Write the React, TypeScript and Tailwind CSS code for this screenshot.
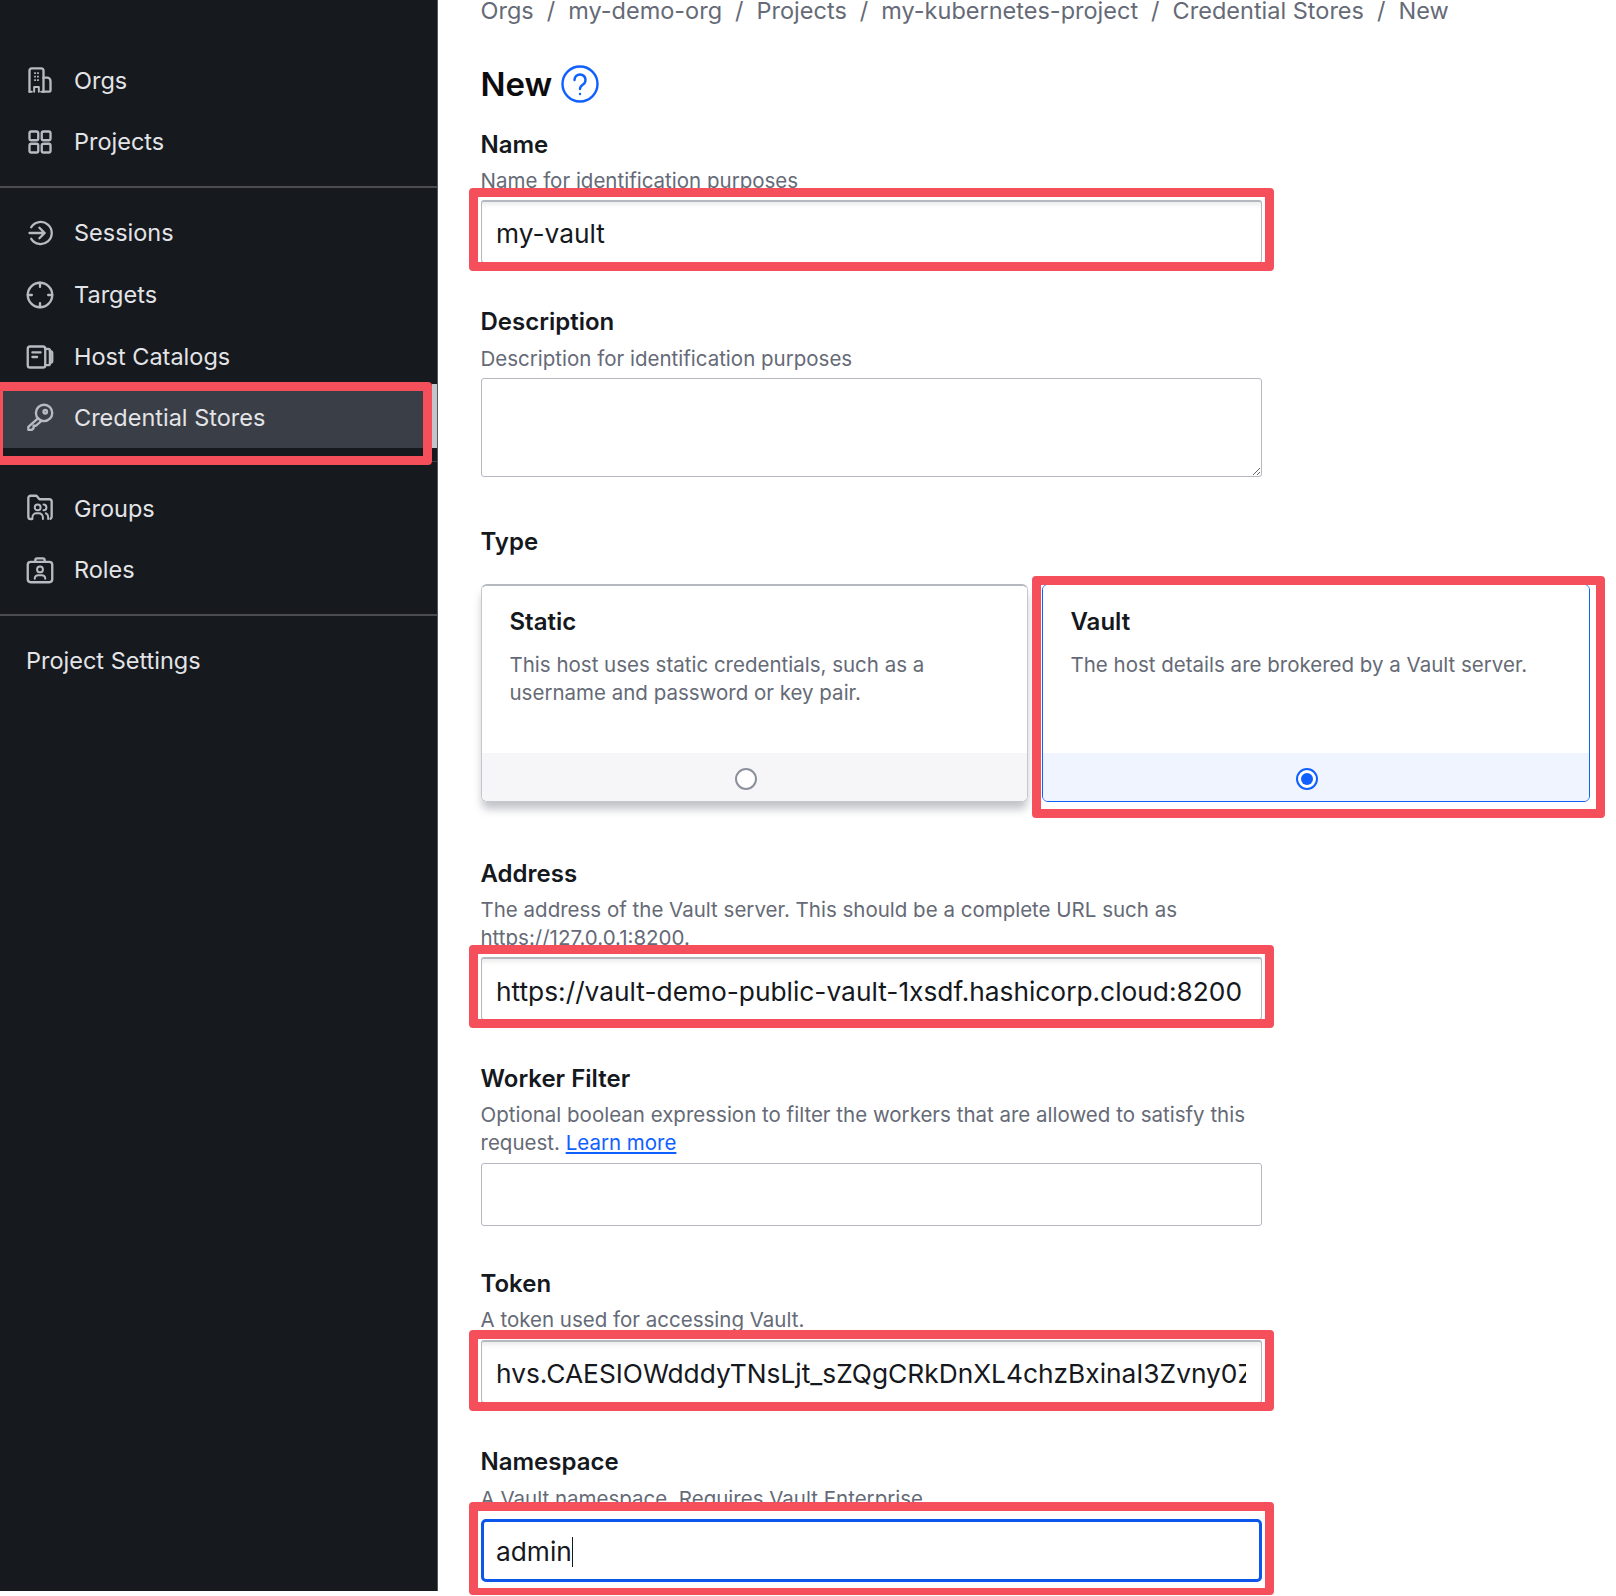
import React from "react";

const ic = { fill: "none", stroke: "currentColor", strokeWidth: 2, strokeLinecap: "round", strokeLinejoin: "round" } as const;

function Icon({ children }: { children: React.ReactNode }) {
  return (
    <svg viewBox="0 0 24 24" className="w-[28px] h-[28px] text-[#b8bbc1] shrink-0" {...ic}>
      {children}
    </svg>
  );
}

const OrgIcon = () => (
  <Icon>
    <path d="M3 22V4a2 2 0 0 1 2-2h8a2 2 0 0 1 2 2v18" />
    <path d="M15 10h3a3 3 0 0 1 3 3v8a1 1 0 0 1-1 1h-5" />
    <path d="M3 22h2M13 22h2M7 22v-4h4v4" strokeWidth="1.700" />
    <path d="M7 6h4M7 9h4M7 12h4" strokeWidth="1.500" strokeLinecap="butt" strokeDasharray="1.500 1" />
  </Icon>
);
const GridIcon = () => (
  <Icon>
    <rect x="3" y="3" width="7.500" height="7.500" rx="1.500" />
    <rect x="13.500" y="3" width="7.500" height="7.500" rx="1.500" />
    <rect x="3" y="13.500" width="7.500" height="7.500" rx="1.500" />
    <rect x="13.500" y="13.500" width="7.500" height="7.500" rx="1.500" />
  </Icon>
);
const SessionIcon = () => (
  <Icon>
    <path d="M4.500 7a9.500 9.500 0 1 1 0 10" />
    <path d="M3 12h13M11.500 7.500 16 12l-4.500 4.500" />
  </Icon>
);
const TargetIcon = () => (
  <Icon>
    <circle cx="12" cy="12" r="10.500" />
    <path d="M12 1.500v3.500M12 19v3.500M1.500 12H5M19 12h3.500" />
  </Icon>
);
const CatalogIcon = () => (
  <Icon>
    <rect x="1.500" y="3" width="15" height="18" rx="2" />
    <path d="M5.500 8h7M5.500 12h4" />
    <path d="M16.500 5H19a1.500 1.500 0 0 1 1.500 1.500v11A1.500 1.500 0 0 1 19 19h-2.500" />
    <path d="M20.500 7c1 0 2 .5 2 1.500v7c0 1-1 1.500-2 1.500" />
  </Icon>
);
const KeyIcon = () => (
  <Icon>
    <circle cx="15.500" cy="8.500" r="7" />
    <circle cx="16.500" cy="7.500" r="1.500" />
    <path d="M10.500 13 2 20.500V23h3l1.500-1.500V19.500h2l4.500-4" />
  </Icon>
);
const GroupIcon = () => (
  <Icon>
    <path d="M5 21.500H4a2 2 0 0 1-2-2V3.500a2 2 0 0 1 2-2h5l2.500 3H20a2 2 0 0 1 2 2v13a2 2 0 0 1-1 1.700" />
    <circle cx="10" cy="11.500" r="2.500" strokeWidth="1.700" />
    <path d="M5.500 21.500v-1.500A3.500 3.500 0 0 1 9 16.500h2a3.500 3.500 0 0 1 3.500 3.500v1.500" strokeWidth="1.700" />
    <path d="M15 9a2.500 2.500 0 0 1 0 5M17 16.500a3.500 3.500 0 0 1 2 3v2" strokeWidth="1.700" />
  </Icon>
);
const RoleIcon = () => (
  <Icon>
    <rect x="1.500" y="5" width="21" height="17.500" rx="2.500" />
    <path d="M8 5V3.500A1.500 1.500 0 0 1 9.500 2h5A1.500 1.500 0 0 1 16 3.500V5" />
    <circle cx="12" cy="11.500" r="2.500" strokeWidth="1.700" />
    <path d="M7.500 19.500v-.5a3 3 0 0 1 3-2.500h3a3 3 0 0 1 3 2.500v.5" strokeWidth="1.700" />
  </Icon>
);

function NavRow({ icon, label }: { icon: React.ReactNode; label: string }) {
  return (
    <div className="h-[61.800px] flex items-center pl-[26px] gap-[20px] text-[23.500px] text-[#e3e4e7] leading-none">
      {icon}
      <span>{label}</span>
    </div>
  );
}

function Highlight({ className }: { className: string }) {
  return <div className={`absolute border-[9px] border-[#f44f5a] rounded-[4px] pointer-events-none ${className}`} />;
}

function Label({ children, className = "" }: { children: React.ReactNode; className?: string }) {
  return <div className={`text-[24px] leading-[30px] font-semibold text-[#15181d] ${className}`}>{children}</div>;
}

function Help({ children, className = "" }: { children: React.ReactNode; className?: string }) {
  return <div className={`text-[20.500px] leading-[27.500px] text-[#656a76] whitespace-nowrap ${className}`}>{children}</div>;
}

const inputBase =
  "block w-full h-[63px] border border-[#b5b8bf] rounded-[3px] bg-white px-[14.500px] text-[26.300px] text-[#15181d] outline-none";
const inputCls = `${inputBase} pt-[4px] border-t-2 shadow-[inset_0_5px_4px_-2px_rgba(101,106,118,0.12)]`;

function TypeCard({ title, lines, selected }: { title: string; lines: string[]; selected?: boolean }) {
  return (
    <div
      className={`h-[218px] rounded-[6px] flex flex-col overflow-hidden ${
        selected
          ? "border-[1.500px] border-[#1060ff]"
          : "border border-[#c5c7cc] border-t-2 border-t-[#b5b8bf] shadow-[0_8px_8px_-1px_rgba(101,106,118,0.4)]"
      }`}
    >
      <div className={`flex-1 bg-white pl-[28px] ${selected ? "pt-[22px]" : "pt-[21px]"}`}>
        <div className="text-[24px] leading-[30px] font-semibold text-[#15181d]">{title}</div>
        <div className="mt-[14px]">
          {lines.map((l) => (
            <Help key={l}>{l}</Help>
          ))}
        </div>
      </div>
      <div className={`h-[48px] flex items-center pl-[253px] pt-[3px] ${selected ? "bg-[#f0f4fe]" : "bg-[#f6f6f8]"}`}>
        {selected ? (
          <div className="w-[22px] h-[22px] rounded-full border-[2px] border-[#1060ff] bg-white flex items-center justify-center">
            <div className="w-[12px] h-[12px] rounded-full bg-[#1060ff]" />
          </div>
        ) : (
          <div className="w-[22px] h-[22px] rounded-full border-[2px] border-[#8c909c] bg-white" />
        )}
      </div>
    </div>
  );
}

export default function App() {
  return (
    <div className="flex h-[1596px] w-[1616px] overflow-hidden bg-white font-['Inter','Liberation_Sans',sans-serif]">
      <aside className="w-[438px] shrink-0 h-[1591px] bg-[#16191e] border-r border-[#55575e] pt-[49.500px]">
        <NavRow icon={<OrgIcon />} label="Orgs" />
        <NavRow icon={<GridIcon />} label="Projects" />
        <div className="mt-[13px] h-[2px] bg-[#4a4c52]" />
        <div className="mt-[14px]">
          <NavRow icon={<SessionIcon />} label="Sessions" />
          <NavRow icon={<TargetIcon />} label="Targets" />
          <NavRow icon={<CatalogIcon />} label="Host Catalogs" />
          <div className="relative mt-[1px]">
            <div className="bg-[#3a3e46] h-[60px] pb-[2px] flex items-center pl-[26px] gap-[20px] text-[23.500px] text-[#e3e4e7] leading-none">
              <KeyIcon />
              <span>Credential Stores</span>
            </div>
            <div className="absolute right-0 top-[-4px] w-[5px] h-[64px] bg-[#c2c5cb]" />
            <Highlight className="left-[-6px] right-[5px] top-[-6px] bottom-[-17px]" />
          </div>
        </div>
        <div className="mt-[13px] h-[1px] bg-[#3f4147]" />
        <div className="mt-[15px]">
          <NavRow icon={<GroupIcon />} label="Groups" />
          <NavRow icon={<RoleIcon />} label="Roles" />
        </div>
        <div className="mt-[13px] h-[2px] bg-[#4a4c52]" />
        <div className="mt-[14px] h-[61.800px] flex items-center pl-[26px] text-[23.500px] text-[#e3e4e7] leading-none">
          Project Settings
        </div>
      </aside>

      <main className="flex-1 pl-[42.500px] min-w-0">
        <div className="flex gap-[13px] text-[23.500px] leading-[30px] text-[#656a76] mt-[-4px] whitespace-nowrap">
          <span>Orgs</span><span>/</span><span>my-demo-org</span><span>/</span><span>Projects</span><span>/</span>
          <span>my-kubernetes-project</span><span>/</span><span>Credential Stores</span><span>/</span><span>New</span>
        </div>

        <div className="flex items-center gap-[9px] mt-[38px] h-[40px]">
          <h1 className="text-[33px] font-semibold leading-none text-[#0c0c0e]">New</h1>
          <svg viewBox="0 0 38 38" className="w-[38px] h-[38px]" fill="none" stroke="#1060ff" strokeWidth="2.400">
            <circle cx="19" cy="19" r="17.500" />
            <path d="M13.500 15a5.500 5.500 0 1 1 8.500 4.600c-2 1.300-3 2.300-3 4.400" strokeLinecap="round" />
            <circle cx="19" cy="29" r="1.200" fill="#1060ff" stroke="none" />
          </svg>
        </div>

        <div className="w-[781px]">
          <Label className="mt-[26px]">Name</Label>
          <Help className="mt-[7px] h-[27.500px]">Name for identification purposes</Help>
          <div className="relative mt-[5px]">
            <input readOnly value="my-vault" className={inputCls} />
            <Highlight className="left-[-12px] right-[-12px] top-[-12px] bottom-[-8px]" />
          </div>

          <Label className="mt-[44px]">Description</Label>
          <Help className="mt-[8px]">Description for identification purposes</Help>
          <textarea readOnly className="block w-full h-[99px] mt-[6px] border border-[#b5b8bf] rounded-[3px] bg-white" />

          <Label className="mt-[50px]">Type</Label>
        </div>

        <div className="grid grid-cols-[547px_548px] gap-[14px] mt-[27px]">
          <TypeCard title="Static" lines={["This host uses static credentials, such as a", "username and password or key pair."]} />
          <div className="relative">
            <TypeCard selected title="Vault" lines={["The host details are brokered by a Vault server."]} />
            <Highlight className="left-[-10px] right-[-15px] top-[-8px] bottom-[-16px]" />
          </div>
        </div>

        <div className="w-[781px]">
          <Label className="mt-[57px]">Address</Label>
          <Help className="mt-[7px]">
            The address of the Vault server. This should be a complete URL such as
            <br />
            https://127.0.0.1:8200.
          </Help>
          <div className="relative mt-[6px]">
            <input readOnly value="https://vault-demo-public-vault-1xsdf.hashicorp.cloud:8200" className={inputCls} />
            <Highlight className="left-[-12px] right-[-12px] top-[-12px] bottom-[-8px]" />
          </div>

          <Label className="mt-[44px]">Worker Filter</Label>
          <Help className="mt-[7px]">
            Optional boolean expression to filter the workers that are allowed to satisfy this
            <br />
            request. <span className="text-[#1060ff] underline">Learn more</span>
          </Help>
          <input readOnly className={`${inputBase} mt-[7px]`} />

          <Label className="mt-[43px]">Token</Label>
          <Help className="mt-[7px]">A token used for accessing Vault.</Help>
          <div className="relative mt-[6px]">
            <input readOnly value="hvs.CAESIOWdddyTNsLjt_sZQgCRkDnXL4chzBxinaI3Zvny0ZxQk" className={inputCls} />
            <Highlight className="left-[-12px] right-[-12px] top-[-10px] bottom-[-8px]" />
          </div>

          <Label className="mt-[44px]">Namespace</Label>
          <Help className="mt-[8px]">A Vault namespace. Requires Vault Enterprise.</Help>
          <div className="relative mt-[7px]">
            <div className="h-[63px] border-[3px] border-[#0c56e9] rounded-[5px] bg-white px-[12.500px] pt-[2px] flex items-center text-[26.300px] text-[#15181d]">
              admin<span className="inline-block w-[1.500px] h-[30px] bg-[#15181d]" />
            </div>
            <Highlight className="left-[-12px] right-[-12px] top-[-17px] bottom-[-13px] border-b-[7px]" />
          </div>
        </div>
      </main>
    </div>
  );
}
